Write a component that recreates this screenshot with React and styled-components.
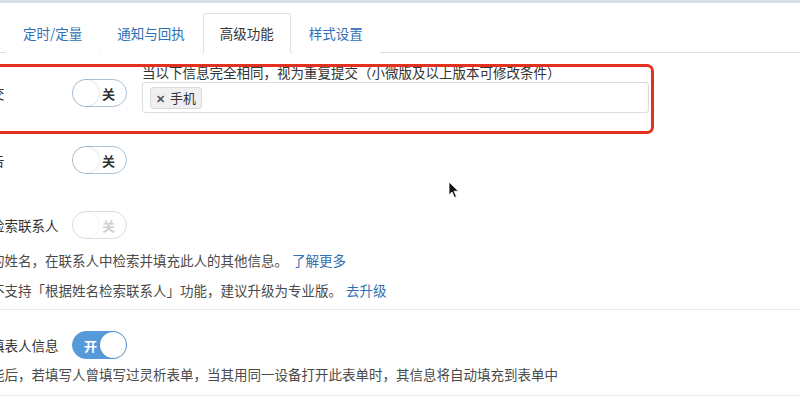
import React from "react";
import styled, { createGlobalStyle } from "styled-components";

const Global = createGlobalStyle`
  html, body {
    margin: 0;
    padding: 0;
    background: #fff;
    overflow: hidden;
  }
  body {
    font-family: "Noto Sans CJK SC", "Noto Sans", sans-serif;
    font-size: 13.5px;
    color: #333;
  }
`;

const Page = styled.div`
  position: relative;
  width: 800px;
  height: 404px;
  overflow: hidden;
  border-top: 3px solid #d6dee8;
  box-sizing: border-box;
`;

const Tabs = styled.ul`
  display: flex;
  margin: 0;
  padding: 10px 0 0 6px;
  list-style: none;
  border-bottom: 1px solid #dedede;
`;

const Tab = styled.li`
  height: 38px;
  padding: 0 16px;
  margin-right: 1px;
  margin-bottom: -1px;
  display: flex;
  align-items: center;
  border: 1px solid ${(p) => (p.$active ? "#e2e2e2" : "transparent")};
  border-bottom-color: ${(p) => (p.$active ? "#fff" : "transparent")};
  border-radius: 3px 3px 0 0;
  background: #fff;
  color: ${(p) => (p.$active ? "#333" : "#2f6fb5")};
  white-space: nowrap;
`;

const Content = styled.div`
  margin-left: -63px;
  padding-top: 10px;
`;

const Row = styled.div`
  display: flex;
  align-items: flex-start;
`;

const Head = styled.div`
  display: flex;
  align-items: center;
  height: 28px;
  margin-top: ${(p) => p.$top || 0}px;
`;

const Label = styled.div`
  width: 135px;
  white-space: nowrap;
  color: #333;
`;

const Switch = styled.div`
  position: relative;
  width: 55px;
  height: 28px;
  box-sizing: border-box;
  border-radius: 14px;
  border: 1px solid ${(p) => (p.$on ? "#569ada" : p.$disabled ? "#dcdcdc" : "#a9c2d8")};
  background: ${(p) => (p.$on ? "#569ada" : "#fff")};
  display: flex;
  align-items: center;
  justify-content: ${(p) => (p.$on ? "flex-start" : "flex-end")};
  padding: 0 11px;
  font-size: 13px;
  font-weight: 700;
  color: ${(p) => (p.$on ? "#fff" : p.$disabled ? "#cfcfcf" : "#333")};
`;

const Knob = styled.span`
  position: absolute;
  top: 0;
  ${(p) => (p.$on ? "right: 0;" : "left: 0;")}
  width: 26px;
  height: 26px;
  border-radius: 50%;
  background: #fff;
  box-shadow: ${(p) => (p.$disabled ? "0 0 1px #ccc" : "0 0 2px rgba(0,0,0,0.25)")};
`;

const Side = styled.div`
  margin-left: 15px;
`;

const Hint = styled.div`
  line-height: 18px;
  color: #333;
  white-space: nowrap;
`;

const TagInput = styled.div`
  width: 507px;
  height: 31px;
  box-sizing: border-box;
  margin-top: 1px;
  border: 1px solid #dcdcdc;
  border-radius: 3px;
  display: flex;
  align-items: center;
  padding-left: 7px;
`;

const Tag = styled.span`
  display: inline-flex;
  align-items: center;
  height: 20px;
  padding: 0 5px;
  background: #f0f0f0;
  border: 1px solid #dadada;
  border-radius: 3px;
  font-size: 13px;
  color: #333;
  b {
    color: #555;
    font-size: 11px;
    margin-right: 5px;
  }
`;

const Desc = styled.div`
  line-height: 30px;
  color: #4a4a4a;
  white-space: nowrap;
  margin-top: ${(p) => p.$top || 0}px;
  a {
    color: #2f6fb5;
    text-decoration: none;
    margin-left: 4px;
  }
`;

const Divider = styled.div`
  height: 1px;
  background: #e8e8e8;
  margin-top: ${(p) => p.$top || 0}px;
  width: 1000px;
`;

const Highlight = styled.div`
  position: absolute;
  left: -20px;
  top: 61px;
  width: 674px;
  height: 70px;
  box-sizing: border-box;
  border: 3px solid #e2321f;
  border-radius: 7px;
  pointer-events: none;
`;

const Cursor = styled.svg`
  position: absolute;
  left: 448px;
  top: 178px;
`;

function Toggle({ on, disabled }) {
  return (
    <Switch $on={on} $disabled={disabled}>
      <Knob $on={on} $disabled={disabled} />
      {on ? "开" : "关"}
    </Switch>
  );
}

export default function App() {
  return (
    <Page>
      <Global />
      <Tabs>
        <Tab>定时/定量</Tab>
        <Tab>通知与回执</Tab>
        <Tab $active>高级功能</Tab>
        <Tab>样式设置</Tab>
      </Tabs>
      <Content>
        <Row>
          <Head $top={16}>
            <Label>防重复提交</Label>
            <Toggle />
          </Head>
          <Side>
            <Hint>当以下信息完全相同，视为重复提交（小微版及以上版本可修改条件）</Hint>
            <TagInput>
              <Tag>
                <b>✕</b>手机
              </Tag>
            </TagInput>
          </Side>
        </Row>
        <Head $top={33}>
          <Label>不显示广告</Label>
          <Toggle />
        </Head>
        <Head $top={37}>
          <Label>根据姓名检索联系人</Label>
          <Toggle disabled />
        </Head>
        <Desc $top={6}>
          根据填写的姓名，在联系人中检索并填充此人的其他信息。<a href="#">了解更多</a>
        </Desc>
        <Desc>
          当前版本不支持「根据姓名检索联系人」功能，建议升级为专业版。<a href="#">去升级</a>
        </Desc>
        <Divider $top={4} />
        <Head $top={21}>
          <Label>自动填充填表人信息</Label>
          <Toggle on />
        </Head>
        <Desc>
          开启此功能后，若填写人曾填写过灵析表单，当其用同一设备打开此表单时，其信息将自动填充到表单中
        </Desc>
        <Divider $top={6} />
      </Content>
      <Highlight />
      <Cursor width="12" height="18" viewBox="0 0 12 18">
        <path d="M1 1 L1 14 L4 11 L6.5 16.5 L8.5 15.6 L6 10.2 L10.5 10.2 Z" fill="#111" stroke="#fff" strokeWidth="0.8" />
      </Cursor>
    </Page>
  );
}
